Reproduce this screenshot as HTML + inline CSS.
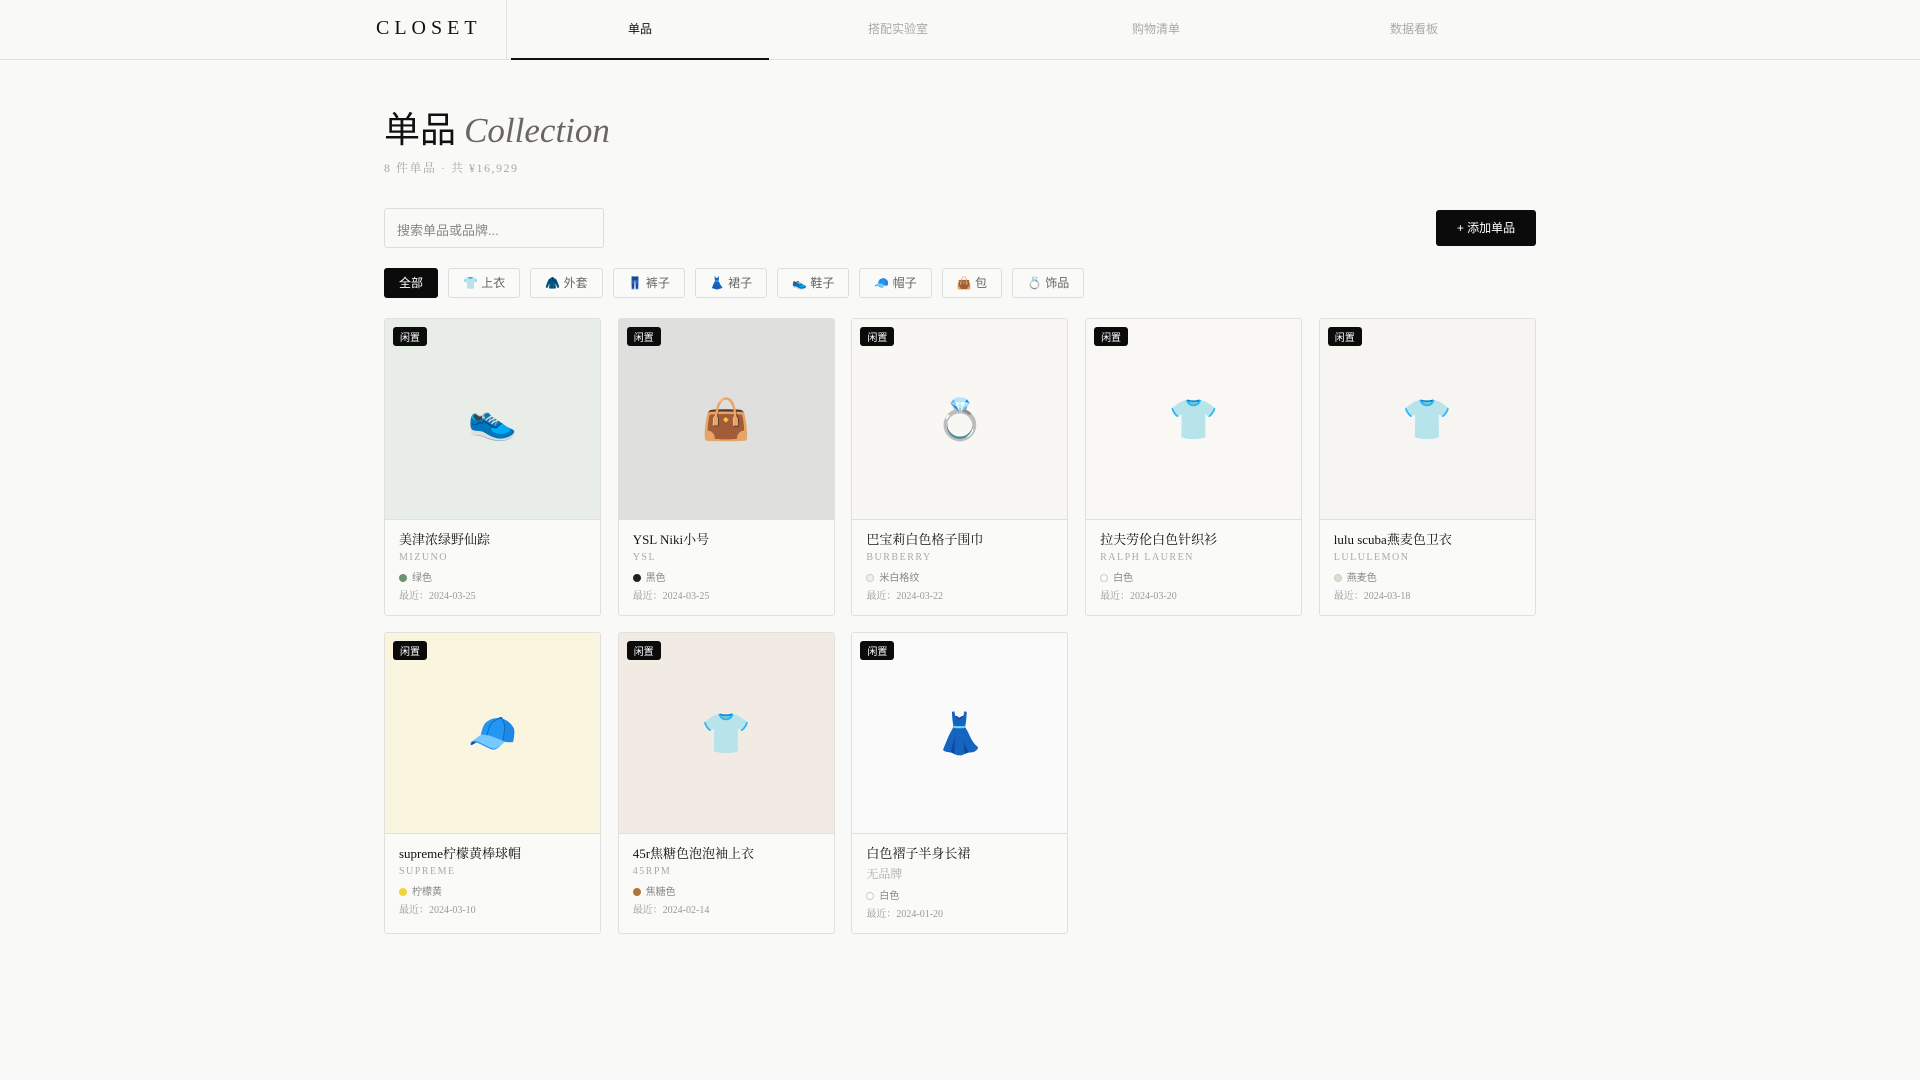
<!DOCTYPE html>
<html><head><meta charset="utf-8"><style>
*{box-sizing:border-box;margin:0;padding:0}
body{width:1920px;height:1080px;background:#f9f9f7;font-family:"Liberation Serif","Noto Serif CJK SC","Noto Sans CJK SC",serif;color:#111;overflow:hidden}
.hdr{height:60px;border-bottom:1px solid #e2e0dc;position:relative}
.logo{position:absolute;left:376px;top:17px;font-size:20px;letter-spacing:5px}
.sep{position:absolute;left:506px;top:0;width:1px;height:59px;background:#e2e0dc}
.tab{position:absolute;top:0;width:258px;height:60px;text-align:center;line-height:58px;font-size:12px;color:#aaa;font-family:"Liberation Sans","Noto Sans CJK SC",sans-serif}
.tab.on{color:#111;border-bottom:2px solid #111}
.wrap{position:absolute;left:384px;top:0;width:1152px}
h1{position:absolute;top:102px;font-weight:normal;font-size:36px;white-space:nowrap;font-family:"Noto Sans CJK SC",sans-serif;line-height:50px}
h1 i{font-family:"Liberation Serif",serif;color:#6b6660;font-size:35px}
.sub{position:absolute;top:159px;font-size:12px;color:#aaa;letter-spacing:1.5px}
.search{position:absolute;top:208px;left:0;width:220px;height:40px;border:1px solid #ddd;border-radius:3px;font-size:13px;color:#888;padding:11px 12px;font-family:"Liberation Sans","Noto Sans CJK SC",sans-serif}
.add{position:absolute;top:210px;left:1052px;width:100px;height:36px;background:#0b0b0b;color:#fff;border-radius:3px;font-size:12px;text-align:center;line-height:36px;font-family:"Liberation Sans","Noto Sans CJK SC",sans-serif}
.chips{position:absolute;top:268px;left:0;display:flex;gap:10px}
.chip{height:30px;border:1px solid #ddd;border-radius:3px;font-size:12px;color:#666;line-height:28px;padding:0 14px;background:#fafaf8;font-family:"Liberation Sans","Noto Sans CJK SC",sans-serif}
.chip.on{background:#0b0b0b;color:#fff;border-color:#0b0b0b;padding:0 14px}
.grid{position:absolute;top:318px;left:0;width:1152px;display:grid;grid-template-columns:repeat(5,217px);column-gap:16.7px;row-gap:16px}
.card{border:1px solid #e2e0dc;border-radius:3px;background:#fafaf8;overflow:hidden}
.img{height:201px;position:relative;border-bottom:1px solid #e2e0dc;display:flex;align-items:center;justify-content:center;font-size:40px;font-family:"Noto Color Emoji",sans-serif}
.badge{position:absolute;left:8px;top:8px;background:#0b0b0b;color:#fff;font-size:10px;padding:3px 7px;border-radius:3px;font-family:"Noto Sans CJK SC",sans-serif;line-height:13px}
.info{padding:11px 14px 9px}
.nm{font-size:13px;line-height:18px}
.br{font-size:10px;color:#aaa;letter-spacing:1.5px;line-height:18px}
.br.big{font-size:12px;letter-spacing:0;line-height:22px}
.cl{font-size:10px;color:#888;line-height:20px;font-family:"Noto Sans CJK SC",sans-serif}
.cl b{display:inline-block;width:8px;height:8px;border-radius:50%;margin-right:5px;vertical-align:-1px}
.dt{font-size:10px;color:#999;line-height:19px}
</style></head><body>
<div class="hdr"><div class="logo">CLOSET</div><div class="sep"></div>
<div class="tab on" style="left:511px">单品</div><div class="tab" style="left:769px">搭配实验室</div><div class="tab" style="left:1027px">购物清单</div><div class="tab" style="left:1285px">数据看板</div></div>
<div class="wrap">
<h1>单品 <i>Collection</i></h1>
<div class="sub">8 件单品 · 共 ¥16,929</div>
<div class="search">搜索单品或品牌...</div>
<div class="add">+ 添加单品</div>
<div class="chips"><div class="chip on">全部</div><div class="chip">👕 上衣</div><div class="chip">🧥 外套</div><div class="chip">👖 裤子</div><div class="chip">👗 裙子</div><div class="chip">👟 鞋子</div><div class="chip">🧢 帽子</div><div class="chip">👜 包</div><div class="chip">💍 饰品</div></div>
<div class="grid">
<div class="card"><div class="img" style="background:#e9ede8"><span class="badge">闲置</span>👟</div><div class="info"><div class="nm">美津浓绿野仙踪</div><div class="br">MIZUNO</div><div class="cl"><b style="background:#6f9270"></b>绿色</div><div class="dt">最近：2024-03-25</div></div></div>
<div class="card"><div class="img" style="background:#dfdfdd"><span class="badge">闲置</span>👜</div><div class="info"><div class="nm">YSL Niki小号</div><div class="br">YSL</div><div class="cl"><b style="background:#222"></b>黑色</div><div class="dt">最近：2024-03-25</div></div></div>
<div class="card"><div class="img" style="background:#f8f7f3"><span class="badge">闲置</span>💍</div><div class="info"><div class="nm">巴宝莉白色格子围巾</div><div class="br">BURBERRY</div><div class="cl"><b style="background:#f3f0ea;border:1px solid #ccc"></b>米白格纹</div><div class="dt">最近：2024-03-22</div></div></div>
<div class="card"><div class="img" style="background:#f9f8f5"><span class="badge">闲置</span>👕</div><div class="info"><div class="nm">拉夫劳伦白色针织衫</div><div class="br">RALPH LAUREN</div><div class="cl"><b style="background:#fff;border:1px solid #ccc"></b>白色</div><div class="dt">最近：2024-03-20</div></div></div>
<div class="card"><div class="img" style="background:#f6f5f2"><span class="badge">闲置</span>👕</div><div class="info"><div class="nm">lulu scuba燕麦色卫衣</div><div class="br">LULULEMON</div><div class="cl"><b style="background:#e6dccb;border:1px solid #ccc"></b>燕麦色</div><div class="dt">最近：2024-03-18</div></div></div>
<div class="card"><div class="img" style="background:#faf5df"><span class="badge">闲置</span>🧢</div><div class="info"><div class="nm">supreme柠檬黄棒球帽</div><div class="br">SUPREME</div><div class="cl"><b style="background:#f2d33a"></b>柠檬黄</div><div class="dt">最近：2024-03-10</div></div></div>
<div class="card"><div class="img" style="background:#f2ebe3"><span class="badge">闲置</span>👕</div><div class="info"><div class="nm">45r焦糖色泡泡袖上衣</div><div class="br">45RPM</div><div class="cl"><b style="background:#b0743e"></b>焦糖色</div><div class="dt">最近：2024-02-14</div></div></div>
<div class="card"><div class="img" style="background:#fafafa"><span class="badge">闲置</span>👗</div><div class="info"><div class="nm">白色褶子半身长裙</div><div class="br big">无品牌</div><div class="cl"><b style="background:#fff;border:1px solid #ccc"></b>白色</div><div class="dt">最近：2024-01-20</div></div></div>
</div></div>
</body></html>
